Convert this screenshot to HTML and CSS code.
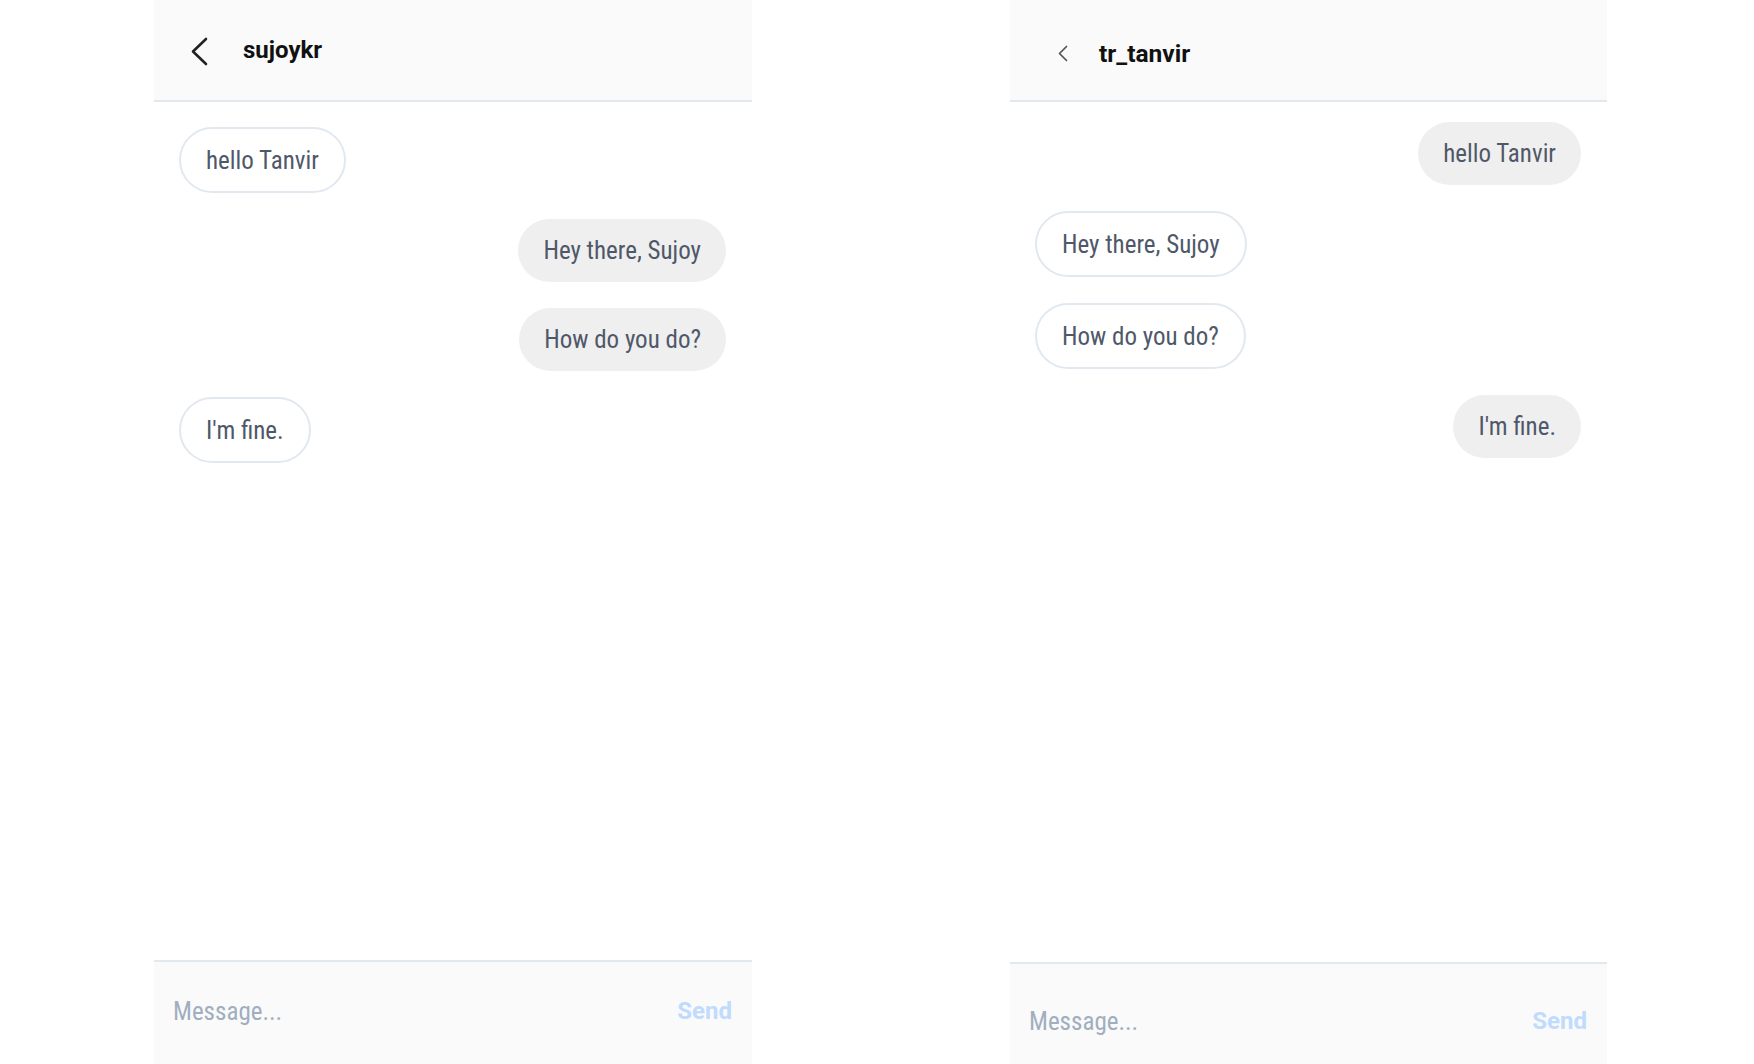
FILE: index.html
```html
<!DOCTYPE html>
<html lang="en">
<head>
<meta charset="utf-8">
<title>Chat</title>
<link rel="stylesheet" href="styles.css">
</head>
<body>
<div class="page">
  <section class="panel panel--left">
    <header class="chat-header">
      <span class="back back--large">
        <svg width="18" height="29" viewBox="0 0 18 29"><polyline points="16,2 3,14.5 16,27" fill="none" stroke="#222" stroke-width="2.6" stroke-linecap="round" stroke-linejoin="round"/></svg>
      </span>
      <span class="chat-name">sujoykr</span>
    </header>
    <div class="messages">
      <div class="bubble bubble--in">hello Tanvir</div>
      <div class="bubble bubble--out">Hey there, Sujoy</div>
      <div class="bubble bubble--out">How do you do?</div>
      <div class="bubble bubble--in">I'm fine.</div>
    </div>
    <footer class="composer">
      <span class="composer-input">Message...</span>
      <span class="composer-send">Send</span>
    </footer>
  </section>

  <section class="panel panel--right">
    <header class="chat-header">
      <span class="back back--small">
        <svg width="11" height="17" viewBox="0 0 11 17"><polyline points="9.5,1.5 2.5,8.5 9.5,15.5" fill="none" stroke="#555" stroke-width="1.7" stroke-linecap="round" stroke-linejoin="round"/></svg>
      </span>
      <span class="chat-name">tr_tanvir</span>
    </header>
    <div class="messages">
      <div class="bubble bubble--out">hello Tanvir</div>
      <div class="bubble bubble--in">Hey there, Sujoy</div>
      <div class="bubble bubble--in">How do you do?</div>
      <div class="bubble bubble--out">I'm fine.</div>
    </div>
    <footer class="composer">
      <span class="composer-input">Message...</span>
      <span class="composer-send">Send</span>
    </footer>
  </section>
</div>
</body>
</html>
```

FILE: styles.css
```css
* { box-sizing: border-box; }

html, body {
  margin: 0;
  padding: 0;
  background: #ffffff;
}

body {
  font-family: Roboto, "Noto Sans", "Liberation Sans", sans-serif;
  color: #4a5568;
}

.page {
  display: flex;
  gap: 258px;
  padding-left: 154px;
  height: 1064px;
  overflow: hidden;
}

.panel {
  width: 598px;
  height: 1064px;
  display: flex;
  flex-direction: column;
  background: #ffffff;
}

.panel--right {
  width: 597px;
}

.chat-header {
  height: 102px;
  flex: none;
  background: #fafafa;
  border-bottom: 2px solid #e2e8f0;
  display: flex;
  align-items: center;
}

.back {
  display: flex;
  align-items: center;
}

.panel--left .chat-header { padding: 0 0 0 36px; }
.panel--left .back { margin-right: 35px; margin-top: 2px; }
.panel--right .chat-header { padding: 6px 0 0 47px; }
.panel--right .back { margin-right: 31px; }

.chat-name {
  font-family: Roboto, "Liberation Sans", sans-serif;
  font-weight: 700;
  font-size: 24px;
  color: #111111;
}

.panel--right .chat-name { font-size: 24.5px; }

.messages {
  flex: 1;
  display: flex;
  flex-direction: column;
  gap: 26px;
  padding: 25px 26px 0 25px;
}

.panel--right .messages { padding-top: 20px; }

.bubble {
  align-self: flex-start;
  display: flex;
  align-items: center;
  height: 63px;
  padding: 0 25px;
  border-radius: 999px;
  font-family: "Roboto Condensed", Roboto, sans-serif;
  font-stretch: condensed;
  font-size: 25px;
  color: #4f5869;
  white-space: nowrap;
}

.bubble--in {
  height: 66px;
  background: #ffffff;
  border: 2px solid #e2e8f0;
}

.bubble--out {
  align-self: flex-end;
  background: #efefef;
}

.composer {
  flex: none;
  height: 104px;
  background: #fafafa;
  border-top: 2px solid #e2e8f0;
  display: flex;
  align-items: flex-start;
  justify-content: space-between;
  padding: 35px 20px 0 19px;
}

.panel--right .composer {
  height: 102px;
  padding-top: 43px;
}

.composer-input {
  font-family: "Roboto Condensed", Roboto, sans-serif;
  font-stretch: condensed;
  font-size: 25px;
  color: #a0aec0;
}

.composer-send {
  font-family: Roboto, sans-serif;
  font-weight: 700;
  font-size: 24px;
  color: #bfdbfe;
}
```
